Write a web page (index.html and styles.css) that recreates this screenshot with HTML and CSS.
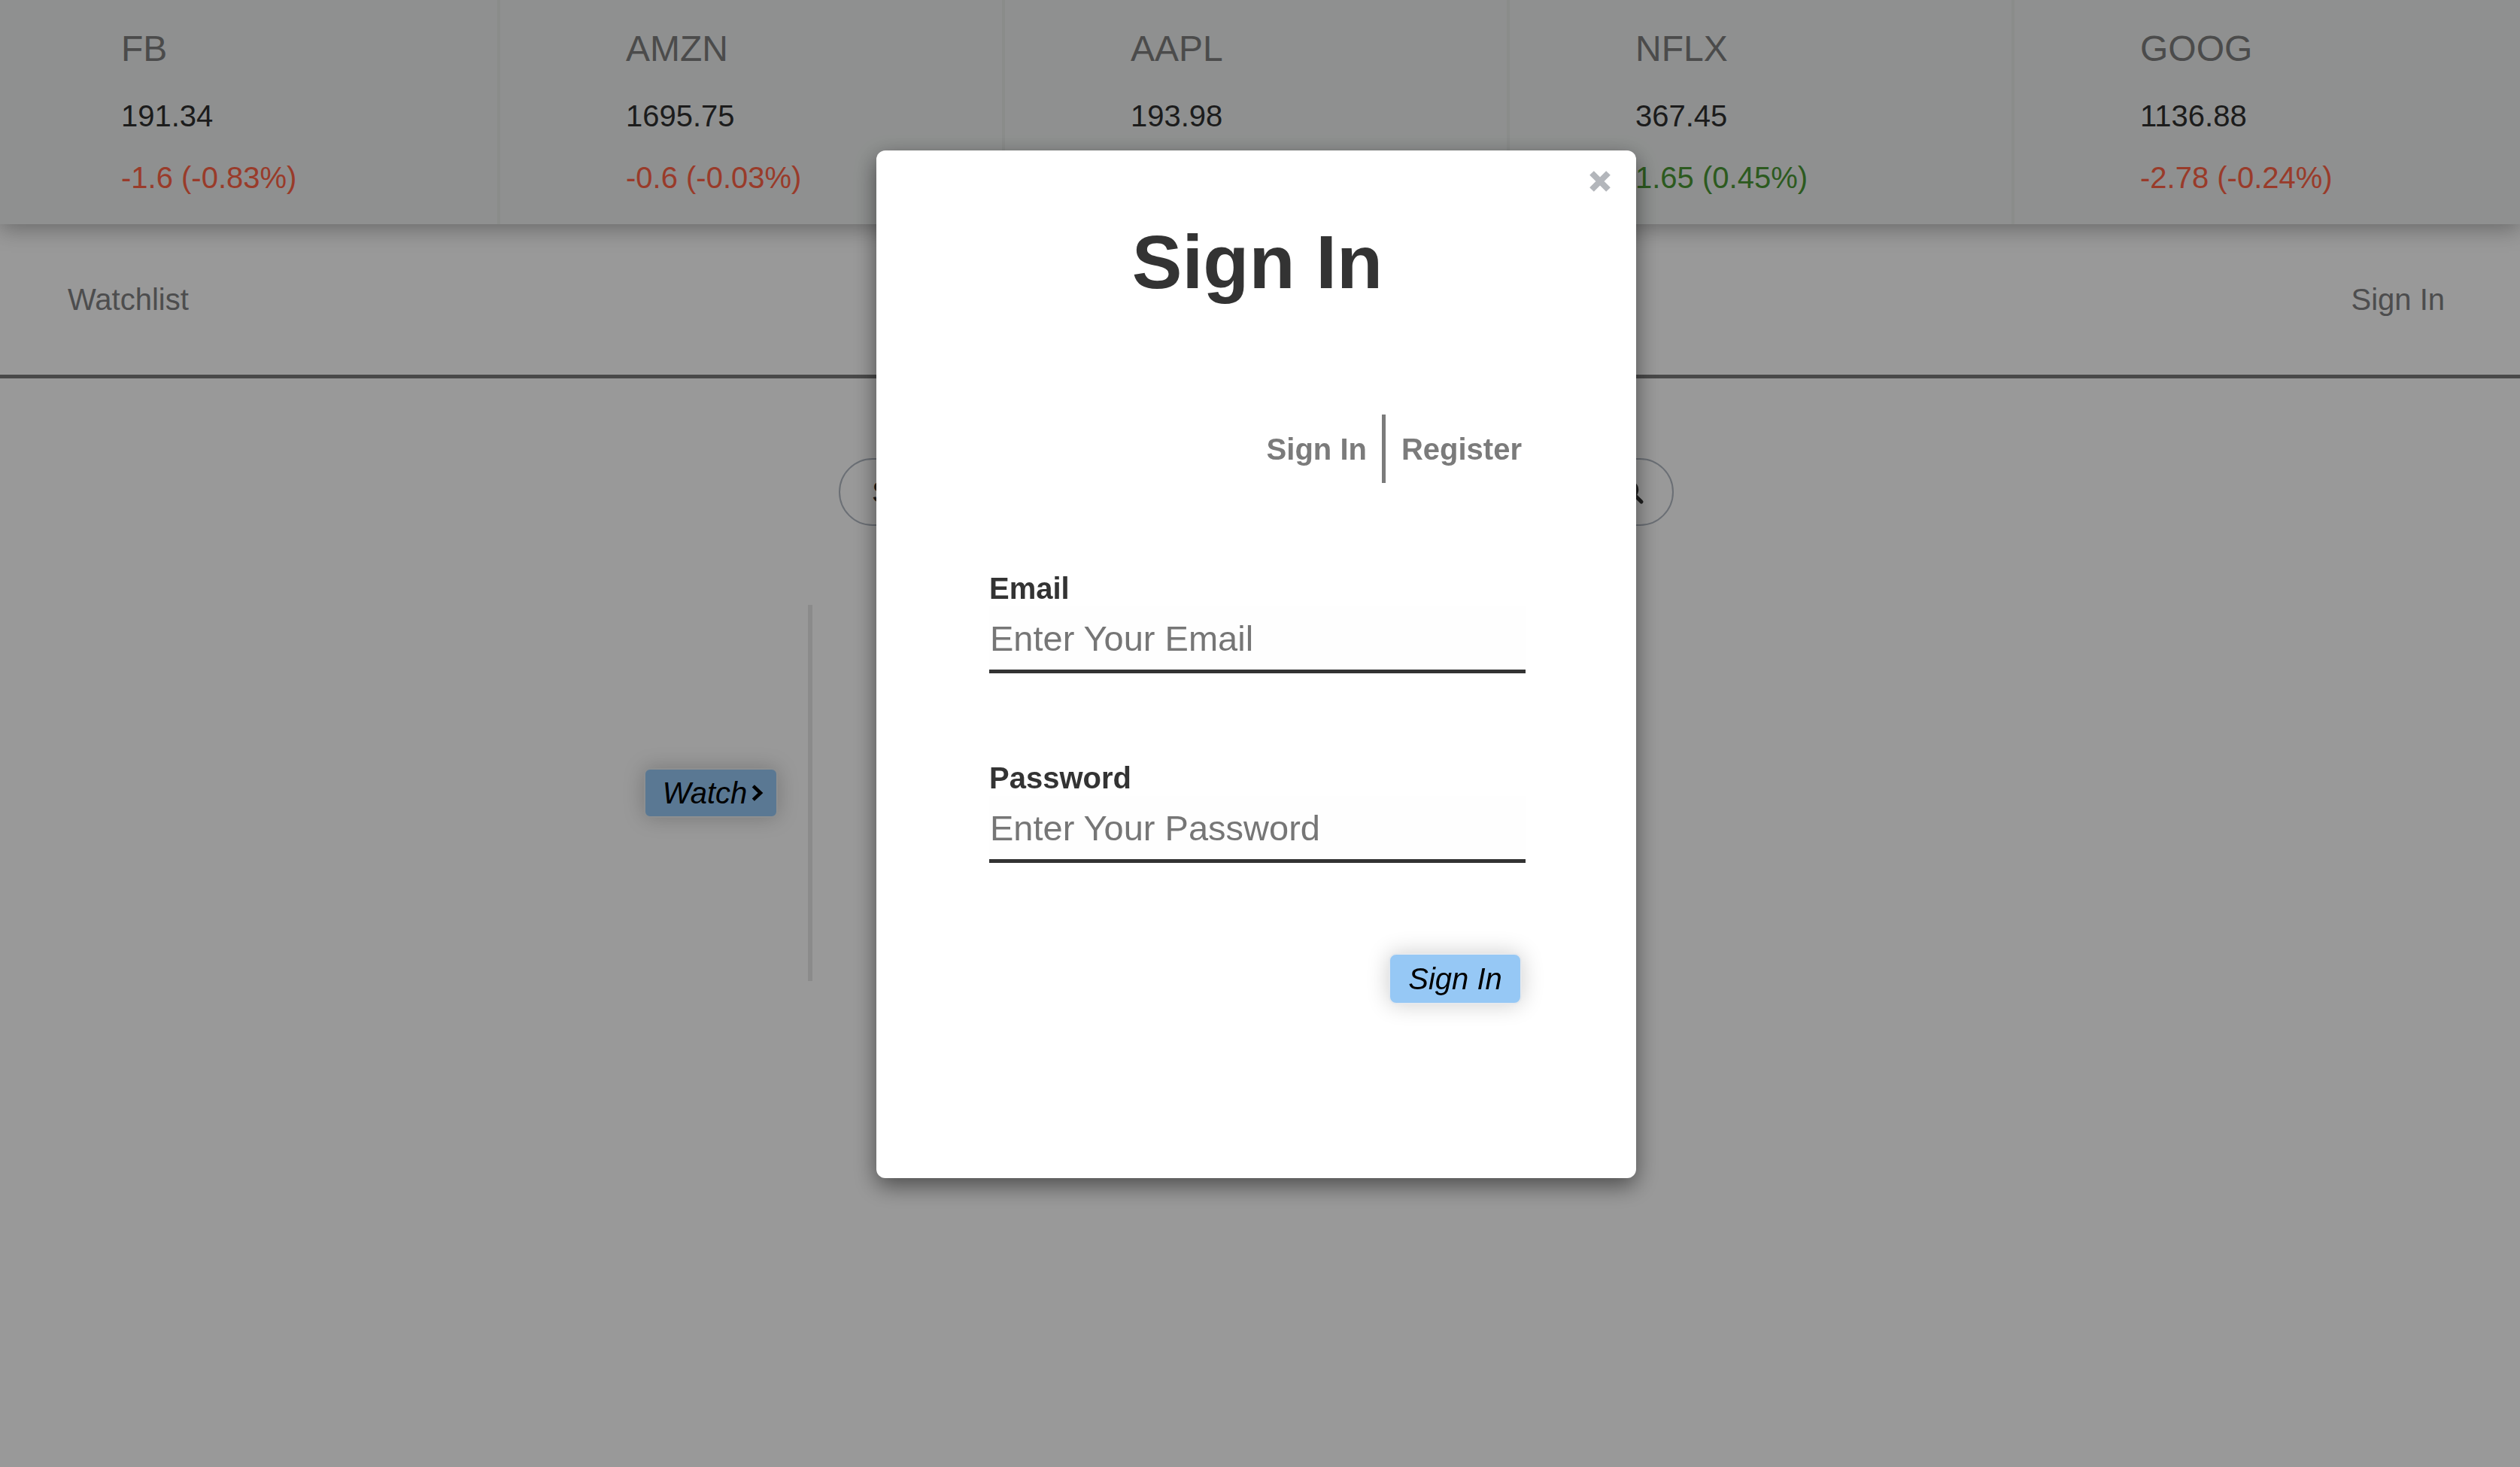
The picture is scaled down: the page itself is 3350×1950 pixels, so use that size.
FILE: index.html
```html
<!DOCTYPE html>
<html lang="en">
<head>
<meta charset="utf-8">
<title>Stocks – Sign In</title>
<link rel="stylesheet" href="styles.css">
</head>
<body>
<div class="page">
  <header class="ticker">
    <div class="stock"><div class="sym">FB</div><div class="price">191.34</div><div class="chg down">-1.6 (-0.83%)</div></div>
    <div class="stock"><div class="sym">AMZN</div><div class="price">1695.75</div><div class="chg down">-0.6 (-0.03%)</div></div>
    <div class="stock"><div class="sym">AAPL</div><div class="price">193.98</div><div class="chg up">0.52 (0.27%)</div></div>
    <div class="stock"><div class="sym">NFLX</div><div class="price">367.45</div><div class="chg up">1.65 (0.45%)</div></div>
    <div class="stock last"><div class="sym">GOOG</div><div class="price">1136.88</div><div class="chg down">-2.78 (-0.24%)</div></div>
  </header>
  <nav class="nav">
    <a class="nav-link">Watchlist</a>
    <a class="nav-link">Sign In</a>
  </nav>
  <main class="main">
    <div class="search">
      <span class="search-text">Search</span>
      <svg class="search-icon" viewBox="0 0 36 36" width="36" height="36"><circle cx="15" cy="15" r="10" fill="none" stroke="#333" stroke-width="4.5"/><path d="M22.5 22.5 L31 31" stroke="#333" stroke-width="5" stroke-linecap="round"/></svg>
    </div>
    <div class="content">
      <div class="side">
        <button class="watch">Watch<svg class="chev" viewBox="0 0 16 24" width="16" height="24"><path d="M4 4.5 L12 12 L4 19.5" fill="none" stroke="#000" stroke-width="4.6" stroke-linecap="square" stroke-linejoin="miter"/></svg></button>
      </div>
      <div class="chart"></div>
    </div>
  </main>
</div>

<div class="backdrop">
  <div class="modal">
    <button class="close" aria-label="Close"><svg viewBox="0 0 34 34" width="34" height="34"><path d="M6 6 L28 28 M28 6 L6 28" stroke="#b3b6bb" stroke-width="8"/></svg></button>
    <h1 class="title">Sign In</h1>
    <div class="tabs">
      <span class="tab">Sign In</span>
      <span class="sep"></span>
      <span class="tab">Register</span>
    </div>
    <form class="form">
      <label class="field">
        <span class="label">Email</span>
        <input class="input" type="email" placeholder="Enter Your Email">
      </label>
      <label class="field second">
        <span class="label">Password</span>
        <input class="input" type="password" placeholder="Enter Your Password">
      </label>
      <div class="actions">
        <button class="submit" type="button">Sign In</button>
      </div>
    </form>
  </div>
</div>
</body>
</html>
```

FILE: styles.css
```css
html, body {
  margin: 0;
  padding: 0;
}
body {
  width: 3350px;
  height: 1950px;
  background: #ffffff;
  font-family: "Liberation Sans", Arial, Helvetica, sans-serif;
  overflow: hidden;
}
.page {
  height: 1950px;
}

/* ticker */
.ticker {
  position: relative;
  z-index: 1;
  display: grid;
  grid-template-columns: repeat(5, 671px);
  height: 298px;
  background: #eef1f0;
  box-shadow: 0 6px 28px rgba(0, 0, 0, 0.32);
}
.stock {
  padding: 41px 0 0 161px;
  border-right: 4px solid #e6e9e7;
  margin-right: 6px;
}
.stock.last {
  border-right: none;
  margin-right: 0;
}
.sym {
  font-size: 48px;
  line-height: 48px;
  color: #7e7e7e;
}
.price {
  margin-top: 45px;
  font-size: 40px;
  line-height: 40px;
  color: #303030;
}
.chg {
  margin-top: 42px;
  font-size: 40px;
  line-height: 40px;
}
.chg.down { color: #ff6347; }
.chg.up { color: #4a9634; }

/* nav */
.nav {
  display: flex;
  justify-content: space-between;
  align-items: center;
  height: 200px;
  padding: 0 100px 0 90px;
  border-bottom: 5px solid #7a7a7a;
}
.nav-link {
  font-size: 40px;
  line-height: 40px;
  color: #808183;
}

/* main */
.main {
  padding-right: 10px;
}
.search {
  box-sizing: border-box;
  width: 1110px;
  height: 90px;
  margin: 106px auto 0;
  border: 2px solid #b2b9c3;
  border-radius: 45px;
  display: flex;
  align-items: center;
  justify-content: space-between;
  padding: 0 36px 0 42px;
}
.search-text {
  font-size: 40px;
  line-height: 40px;
  color: #333;
}
.content {
  display: flex;
  margin-top: 105px;
}
.side {
  width: 1034px;
  height: 500px;
  padding-right: 40px;
  border-right: 6px solid #e8e8e8;
  display: flex;
  align-items: center;
  justify-content: flex-end;
}
.chart {
  flex: 1;
}
.watch {
  box-sizing: border-box;
  width: 178px;
  height: 66px;
  display: inline-flex;
  align-items: center;
  justify-content: center;
  gap: 6px;
  padding: 0 0 0 6px;
  background: #96c8f5;
  border: 2px solid #eceef1;
  border-radius: 8px;
  box-shadow: 0 0 28px rgba(0, 0, 0, 0.22);
  font-family: "Liberation Sans", Arial, sans-serif;
  font-style: italic;
  font-size: 40px;
  color: #000;
}
.chev {
  display: block;
}

/* modal */
.backdrop {
  position: fixed;
  inset: 0;
  background: rgba(0, 0, 0, 0.4);
  z-index: 10;
  padding-right: 10px;
}
.modal {
  position: relative;
  box-sizing: border-box;
  width: 1010px;
  height: 1366px;
  margin: 200px auto 0;
  padding: 97px 147px 0 150px;
  background: #ffffff;
  border-radius: 12px;
  box-shadow: 0 10px 30px rgba(0, 0, 0, 0.5);
}
.close {
  position: absolute;
  top: 24px;
  right: 31px;
  width: 34px;
  height: 34px;
  padding: 0;
  border: none;
  background: none;
}
.close svg {
  display: block;
}
.title {
  margin: 0;
  text-align: center;
  font-size: 100px;
  line-height: 102px;
  font-weight: bold;
  color: #333333;
}
.tabs {
  display: flex;
  justify-content: flex-end;
  align-items: center;
  height: 91px;
  margin-top: 152px;
  padding-right: 5px;
}
.tab {
  font-size: 40px;
  line-height: 40px;
  font-weight: bold;
  color: #7b7b7b;
}
.sep {
  width: 5px;
  height: 91px;
  margin: 0 21px 0 20px;
  background: #7b7b7b;
}
.form {
  margin: 120px 0 0;
}
.field {
  display: block;
}
.field.second {
  margin-top: 119px;
}
.label {
  display: block;
  margin-bottom: 4px;
  font-size: 40px;
  line-height: 40px;
  font-weight: bold;
  color: #333333;
}
.input {
  display: block;
  box-sizing: border-box;
  width: 100%;
  height: 89px;
  margin: 0;
  padding: 0 0 0 1px;
  border: none;
  border-bottom: 5px solid #333333;
  background: #fefefe;
  font-family: "Liberation Sans", Arial, sans-serif;
  font-size: 47px;
  color: #333;
  outline: none;
}
.input::placeholder {
  color: #767676;
}
.actions {
  display: flex;
  justify-content: flex-end;
  margin-top: 120px;
  padding-right: 5px;
}
.submit {
  box-sizing: border-box;
  width: 177px;
  height: 68px;
  padding: 0;
  background: #96c8f5;
  border: 2px solid #e6e9ed;
  border-radius: 10px;
  box-shadow: 0 0 30px rgba(0, 0, 0, 0.2);
  font-family: "Liberation Sans", Arial, sans-serif;
  font-style: italic;
  font-size: 40px;
  color: #000;
}
```
